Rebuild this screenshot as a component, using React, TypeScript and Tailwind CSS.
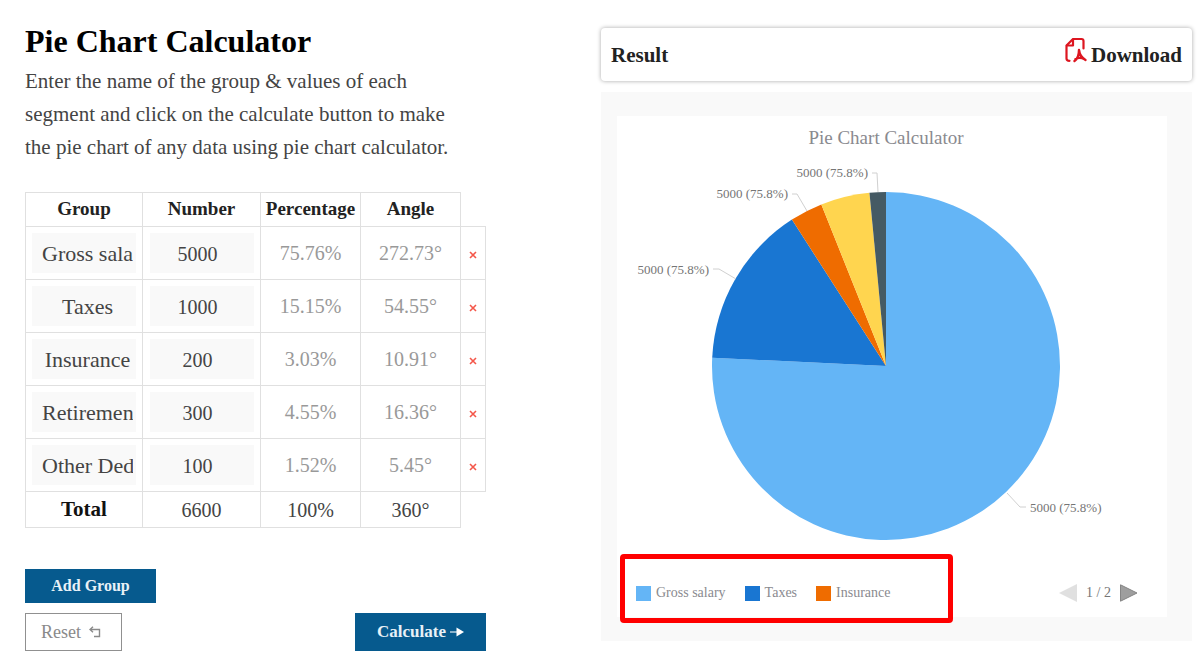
import { useState } from 'react';

type Row = {
  name: string;
  value: string;
  percentage: string;
  angle: string;
};

const initialRows: Row[] = [
  { name: 'Gross salary', value: '5000', percentage: '75.76%', angle: '272.73°' },
  { name: 'Taxes', value: '1000', percentage: '15.15%', angle: '54.55°' },
  { name: 'Insurance', value: '200', percentage: '3.03%', angle: '10.91°' },
  { name: 'Retirement', value: '300', percentage: '4.55%', angle: '16.36°' },
  { name: 'Other Deductions', value: '100', percentage: '1.52%', angle: '5.45°' },
];

const slices = [
  { value: 5000, color: '#64b5f6' },
  { value: 1000, color: '#1976d2' },
  { value: 200, color: '#ef6c00' },
  { value: 300, color: '#ffd54f' },
  { value: 100, color: '#455a64' },
];

const labels = [
  { x: 251, y: 27, anchor: 'end', line: '255,23 260,23 261,42' },
  { x: 171, y: 48, anchor: 'end', line: '175,44 180,44 190,61' },
  { x: 92, y: 124, anchor: 'end', line: '96,119 102,119 119,129' },
  { x: 413, y: 362, anchor: 'start', line: '390,343 403,357 409,357' },
] as const;

const CX = 269;
const CY = 216;
const R = 174;

function point(angle: number) {
  return `${CX + R * Math.sin(angle)} ${CY - R * Math.cos(angle)}`;
}

function PieChart() {
  const total = slices.reduce((sum, s) => sum + s.value, 0);
  let start = 0;

  return (
    <svg viewBox="0 0 550 410" className="block w-full" role="img" aria-label="Pie chart">
      {slices.map(s => {
        const end = start + (s.value / total) * Math.PI * 2;
        const large = end - start > Math.PI ? 1 : 0;
        const d = `M${CX} ${CY} L${point(start)} A${R} ${R} 0 ${large} 1 ${point(end)} Z`;
        start = end;
        return <path key={s.color} d={d} fill={s.color} />;
      })}
      {labels.map(l => (
        <g key={l.line}>
          <polyline points={l.line} fill="none" stroke="#d0d0d0" />
          <text x={l.x} y={l.y} textAnchor={l.anchor} className="fill-[#757575] text-[13px]">
            5000 (75.8%)
          </text>
        </g>
      ))}
    </svg>
  );
}

function PdfIcon() {
  return (
    <svg
      width="22"
      height="26"
      viewBox="0 0 22 26"
      fill="none"
      stroke="#dd1620"
      strokeWidth="2.200"
      strokeLinecap="round"
      strokeLinejoin="round"
    >
      <path d="M18.500 11.500V4Q18.500 2 16.500 2H8L1.500 8.500V21.500Q1.500 23.800 4.500 23.800" />
      <path d="M8 2.500V8.500H2" />
      <path
        d="M14 13C14 18 12.500 22 9.500 24M14 13C14.500 17.500 17 21 20.500 23M10.500 22C13 20.600 16.500 20.600 19.500 22.300"
        strokeWidth="2.400"
      />
    </svg>
  );
}

function Legend() {
  return (
    <div className="relative flex items-center justify-between h-[52px] mt-1 pt-[6px] pl-[19px] pr-[29px] text-sm text-[#8a8a8f]">
      <ul className="flex items-center gap-[19px]">
        <li className="flex items-center gap-[5px]">
          <span className="size-[15px] bg-[#64b5f6]" />
          Gross salary
        </li>
        <li className="flex items-center gap-[5px]">
          <span className="size-[15px] bg-[#1976d2]" />
          Taxes
        </li>
        <li className="flex items-center gap-[5px]">
          <span className="size-[15px] bg-[#ef6c00]" />
          Insurance
        </li>
      </ul>
      <div className="flex items-center gap-[9px]">
        <button type="button" aria-label="Previous page">
          <svg width="18" height="18" viewBox="0 0 18 18">
            <path d="M18 0V18L0 9Z" fill="#e0e0e0" />
          </svg>
        </button>
        <span className="text-[#757575]">1 / 2</span>
        <button type="button" aria-label="Next page">
          <svg width="18" height="18" viewBox="0 0 18 18">
            <path d="M.5 .8V17.200L17 9Z" fill="#9e9e9e" stroke="#858585" />
          </svg>
        </button>
      </div>
      <div className="absolute left-[3px] -top-[10px] w-[333px] h-[69px] border-5 border-[#ff0000] rounded-sm pointer-events-none" />
    </div>
  );
}

export default function App() {
  const [rows, setRows] = useState(initialRows);

  const update = (index: number, patch: Partial<Row>) =>
    setRows(rows.map((r, i) => (i === index ? { ...r, ...patch } : r)));

  const cell = 'border border-[#e0e0e0] p-0';
  const input =
    'block w-[104px] h-10 mx-auto pt-[2px] pl-[10px] bg-[#f9f9f9] text-center text-[#444] outline-none';

  return (
    <main className="grid grid-cols-2 bg-white font-['Liberation_Serif',serif] text-[#444]">
      <section className="pl-[25px] pr-[114px] pt-5">
        <h1 className="text-[32px] leading-[42px] font-bold text-black">Pie Chart Calculator</h1>
        <p className="max-w-[440px] mt-[3px] text-[21px] leading-[33px]">
          Enter the name of the group &amp; values of each segment and click on the calculate button
          to make the pie chart of any data using pie chart calculator.
        </p>

        <table className="w-full mt-7 table-fixed border-collapse text-center text-xl">
          <colgroup>
            <col className="w-[117px]" />
            <col className="w-[118px]" />
            <col className="w-[100px]" />
            <col className="w-[100px]" />
            <col />
          </colgroup>
          <thead>
            <tr className="h-[34px] text-[19px] text-[#222]">
              <th className={cell}>Group</th>
              <th className={cell}>Number</th>
              <th className={cell}>Percentage</th>
              <th className={cell}>Angle</th>
              <td />
            </tr>
          </thead>
          <tbody>
            {rows.map((row, i) => (
              <tr key={i} className="h-[53px] text-[#999]">
                <td className={cell}>
                  <input
                    className={`${input} pr-[3px] text-[22px]`}
                    aria-label="Group name"
                    value={row.name}
                    onChange={e => update(i, { name: e.target.value })}
                  />
                </td>
                <td className={cell}>
                  <input
                    className={`${input} pr-[18px]`}
                    aria-label="Number"
                    inputMode="numeric"
                    value={row.value}
                    onChange={e => update(i, { value: e.target.value })}
                  />
                </td>
                <td className={cell}>{row.percentage}</td>
                <td className={cell}>{row.angle}</td>
                <td className={cell}>
                  <button
                    type="button"
                    aria-label="Remove group"
                    className="block mx-auto pt-1"
                    onClick={() => setRows(rows.filter((_, n) => n !== i))}
                  >
                    <svg width="8" height="8" viewBox="0 0 8 8" stroke="#f4574a" strokeWidth="1.600">
                      <path d="M1 1L7 7M7 1L1 7" />
                    </svg>
                  </button>
                </td>
              </tr>
            ))}
          </tbody>
          <tfoot>
            <tr className="h-9">
              <th className={`${cell} text-[21px] text-[#111]`}>Total</th>
              <td className={cell}>6600</td>
              <td className={cell}>100%</td>
              <td className={cell}>360°</td>
              <td />
            </tr>
          </tfoot>
        </table>

        <button
          type="button"
          className="block w-[131px] h-[34px] mt-[41px] bg-[#065a8e] text-base font-bold text-[#e8f1f7]"
          onClick={() => setRows([...rows, { name: '', value: '', percentage: '', angle: '' }])}
        >
          Add Group
        </button>
        <div className="flex justify-between mt-[10px]">
          <button
            type="button"
            className="flex items-center gap-2 h-[38px] pl-[15px] pr-5 border border-[#909090] text-lg text-[#8a8a8a]"
            onClick={() => setRows(initialRows)}
          >
            Reset
            <svg width="12" height="12" viewBox="0 0 12 12" fill="none" stroke="#8a8a8a" strokeWidth="1.400">
              <path d="M4 .8L1 3.500L4 6.200M1 3.500H10.500V10.500H5" />
            </svg>
          </button>
          <button
            type="button"
            className="flex items-center justify-center gap-1 w-[131px] h-[38px] bg-[#065a8e] text-[17px] font-bold text-[#e8f1f7]"
          >
            Calculate
            <svg width="14" height="10" viewBox="0 0 14 10">
              <path d="M0 5H7" stroke="#c5d9e6" strokeWidth="1.400" />
              <path d="M6.500 .5L14 5L6.500 9.500Z" fill="#fff" />
            </svg>
          </button>
        </div>
      </section>

      <section className="pt-7 pl-px pr-2">
        <div className="flex items-center justify-between h-[53px] pt-[2px] px-[10px] rounded-sm bg-white shadow-[0_0_4px_rgba(0,0,0,0.35)] text-[21px] font-bold text-[#222]">
          <h2>Result</h2>
          <a href="#download" className="flex items-center gap-1">
            <span className="pb-3">
              <PdfIcon />
            </span>
            Download
          </a>
        </div>

        <div className="mt-[11px] pt-6 pb-6 pl-4 pr-[25px] bg-[#f9f9f9]">
          <div className="bg-white pt-[10px] pb-[1px]">
            <h3 className="pr-3 text-center text-[19px] leading-6 text-[#8a8a8f]">Pie Chart Calculator</h3>
            <PieChart />
            <Legend />
          </div>
        </div>
      </section>
    </main>
  );
}
